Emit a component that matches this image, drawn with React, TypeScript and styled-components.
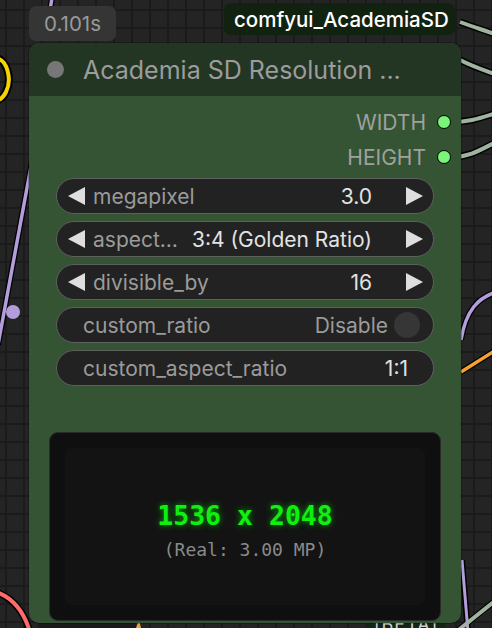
import { createGlobalStyle } from "styled-components";
import styled from "styled-components";

const GlobalStyle = createGlobalStyle`
  html, body {
    margin: 0;
    padding: 0;
    width: 492px;
    height: 628px;
    overflow: hidden;
    background: #242424;
  }
`;

const Canvas = styled.div`
  position: relative;
  width: 492px;
  height: 628px;
  overflow: hidden;
  font-family: Inter, "Liberation Sans", Arial, sans-serif;
  background-color: #242424;
  background-image:
    linear-gradient(to right, #1b1b1b 2px, transparent 2px),
    linear-gradient(to bottom, #1b1b1b 2px, transparent 2px);
  background-size: 18px 18px;
  background-position: 5px 9px;
`;

const Wires = styled.svg`
  position: absolute;
  left: 0;
  top: 0;
`;

const TimeBadge = styled.div`
  position: absolute;
  left: 29px;
  top: 6px;
  width: 87px;
  height: 35px;
  border-radius: 7px;
  background: #353535;
  color: #9a9a9a;
  font-size: 20.5px;
  display: flex;
  align-items: center;
  justify-content: center;
`;

const SourceBadge = styled.div`
  position: absolute;
  left: 224px;
  top: 3px;
  height: 32px;
  padding: 0 6px 0 10px;
  border-radius: 7px;
  background: #112211;
  color: #ffffff;
  font-size: 20.5px;
  font-weight: 500;
  display: flex;
  align-items: center;
  z-index: 1;
`;

const BetaText = styled.div`
  position: absolute;
  left: 374px;
  top: 614px;
  color: #cfcfcf;
  font-size: 18px;
  letter-spacing: 1px;
`;

const Node = styled.div`
  position: absolute;
  left: 29px;
  top: 43px;
  width: 432px;
  height: 580px;
  border-radius: 10px;
  background: #345434;
  display: flex;
  flex-direction: column;
  overflow: hidden;
  box-shadow: 0 0 0 1px rgba(0, 0, 0, 0.25);
  z-index: 2;
`;

const TitleBar = styled.div`
  height: 53px;
  flex-shrink: 0;
  background: #233523;
  display: flex;
  align-items: center;
  padding-left: 18px;
  gap: 19px;
`;

const TitleDot = styled.div`
  width: 17px;
  height: 17px;
  border-radius: 50%;
  background: #777;
`;

const Title = styled.div`
  color: #9c9c9c;
  font-size: 25px;
  white-space: nowrap;
`;

const Body = styled.div`
  flex: 1;
  display: flex;
  flex-direction: column;
  padding: 14px 0 2px;
`;

const Outputs = styled.div`
  display: flex;
  flex-direction: column;
  align-items: flex-end;
  gap: 11px;
  padding-right: 10px;
  margin-bottom: 9px;
`;

const OutputRow = styled.div`
  display: flex;
  align-items: center;
  gap: 11px;
  height: 24px;
  color: #a0a0a0;
  font-size: 21px;
`;

const Socket = styled.div`
  width: 12px;
  height: 12px;
  border-radius: 50%;
  background: #7af57a;
  border: 1.5px solid #000;
`;

const Widgets = styled.div`
  display: flex;
  flex-direction: column;
  gap: 7px;
  padding: 0 27px;
`;

const Widget = styled.div`
  height: 34px;
  border-radius: 18px;
  border: 1px solid #5f5f5f;
  background: #222;
  display: flex;
  align-items: center;
  padding: 0 10px 0 11px;
  font-size: 21px;
  color: #9b9b9b;
  white-space: nowrap;
`;

const Arrow = styled.span<{ $dir: "left" | "right" }>`
  width: 0;
  height: 0;
  border-top: 9px solid transparent;
  border-bottom: 9px solid transparent;
  ${(p) =>
    p.$dir === "left"
      ? "border-right: 17px solid #dedede; margin-right: 8px;"
      : "border-left: 17px solid #dedede; margin-left: 34px;"}
  flex-shrink: 0;
`;

const Label = styled.span<{ $indent?: boolean }>`
  flex: 1;
  padding-left: ${(p) => (p.$indent ? "15px" : "0")};
  overflow: hidden;
  text-overflow: ellipsis;
`;

const Value = styled.span<{ $muted?: boolean }>`
  color: ${(p) => (p.$muted ? "#9b9b9b" : "#e2e2e2")};
`;

const Toggle = styled.span`
  width: 26px;
  height: 26px;
  border-radius: 50%;
  background: #363636;
  margin-left: 6px;
  margin-right: 3px;
`;

const Display = styled.div`
  margin: 46px 20px 0;
  flex: 1;
  border-radius: 9px;
  background: #0f0f0f;
  border: 1px solid #2a2a2a;
  padding: 15px;
  display: flex;
`;

const DisplayInner = styled.div`
  flex: 1;
  border-radius: 6px;
  background: #131313;
  display: flex;
  flex-direction: column;
  align-items: center;
  justify-content: center;
  font-family: "DejaVu Sans Mono", "Liberation Mono", monospace;
  padding-top: 6px;
`;

const Resolution = styled.div`
  color: #10f010;
  font-size: 26.5px;
  font-weight: bold;
  text-shadow: 0 0 6px rgba(0, 255, 0, 0.6);
`;

const Real = styled.div`
  margin-top: 8px;
  color: #8a8a8a;
  font-size: 18px;
`;

type Spin = { label: string; value: string };

const spinners: Spin[] = [
  { label: "megapixel", value: "3.0" },
  { label: "aspect…", value: "3:4 (Golden Ratio)" },
  { label: "divisible_by", value: "16" },
];

export default function App() {
  return (
    <>
      <GlobalStyle />
      <Canvas>
        <Wires width="492" height="628" viewBox="0 0 492 628">
          {/* yellow link top-left */}
          <path d="M-6 58 C8 58 12 80 6 92 C2 100 -4 102 -8 100" fill="none" stroke="#000" strokeWidth="8" />
          <path d="M-6 58 C8 58 12 80 6 92 C2 100 -4 102 -8 100" fill="none" stroke="#f5d400" strokeWidth="4" />
          {/* purple link left */}
          <path d="M52 -2 L45 40 M34 150 L-2 345" fill="none" stroke="#000" strokeWidth="6" />
          <path d="M52 -2 L45 40 M34 150 L-2 345" fill="none" stroke="#b39ddb" strokeWidth="3.5" />
          <circle cx="13" cy="312" r="7" fill="#b39ddb" />
          {/* output links right */}
          <path d="M460 22 C476 28 484 30 500 36 M460 60 C476 68 484 70 500 76 M452 122 C470 122 480 118 500 112 M452 157 C470 157 480 150 500 140" fill="none" stroke="#000" strokeWidth="7" />
          <path d="M460 22 C476 28 484 30 500 36 M460 60 C476 68 484 70 500 76 M452 122 C470 122 480 118 500 112 M452 157 C470 157 480 150 500 140" fill="none" stroke="#9fb39f" strokeWidth="4" />
          {/* purple curve and orange link right */}
          <path d="M461 340 C466 310 478 298 496 292 M461 372 L496 350" fill="none" stroke="#000" strokeWidth="6" />
          <path d="M461 340 C466 310 478 298 496 292" fill="none" stroke="#b39ddb" strokeWidth="3.5" />
          <path d="M461 372 L496 350" fill="none" stroke="#f5a030" strokeWidth="3.5" />
          {/* bottom right links */}
          <path d="M462 560 L468 632 M456 632 L496 600" fill="none" stroke="#000" strokeWidth="6" />
          <path d="M462 560 L468 632" fill="none" stroke="#b39ddb" strokeWidth="3" />
          <path d="M456 632 L496 600" fill="none" stroke="#9fb39f" strokeWidth="4" />
          {/* bottom left red */}
          <path d="M-4 592 C14 598 24 612 30 632" fill="none" stroke="#000" strokeWidth="7" />
          <path d="M-4 592 C14 598 24 612 30 632" fill="none" stroke="#ff6b6b" strokeWidth="4" />
          <rect x="38" y="623" width="98" height="6" fill="#1a1a1a" />
          <path d="M136 628 L139 620 L141 628 Z" fill="#f5a030" />
          <rect x="365" y="621" width="80" height="8" fill="#132513" />
        </Wires>

        <TimeBadge>0.101s</TimeBadge>
        <SourceBadge>comfyui_AcademiaSD</SourceBadge>
        <BetaText>[BETA]</BetaText>

        <Node>
          <TitleBar>
            <TitleDot />
            <Title>Academia SD Resolution ...</Title>
          </TitleBar>
          <Body>
            <Outputs>
              <OutputRow>
                WIDTH <Socket />
              </OutputRow>
              <OutputRow>
                HEIGHT <Socket />
              </OutputRow>
            </Outputs>
            <Widgets>
              {spinners.map((s) => (
                <Widget key={s.label}>
                  <Arrow $dir="left" />
                  <Label>{s.label}</Label>
                  <Value>{s.value}</Value>
                  <Arrow $dir="right" />
                </Widget>
              ))}
              <Widget>
                <Label $indent>custom_ratio</Label>
                <Value $muted>Disable</Value>
                <Toggle />
              </Widget>
              <Widget>
                <Label $indent>custom_aspect_ratio</Label>
                <Value>1:1</Value>
                <span style={{ width: 15 }} />
              </Widget>
            </Widgets>
            <Display>
              <DisplayInner>
                <Resolution>1536 x 2048</Resolution>
                <Real>(Real: 3.00 MP)</Real>
              </DisplayInner>
            </Display>
          </Body>
        </Node>
      </Canvas>
    </>
  );
}
